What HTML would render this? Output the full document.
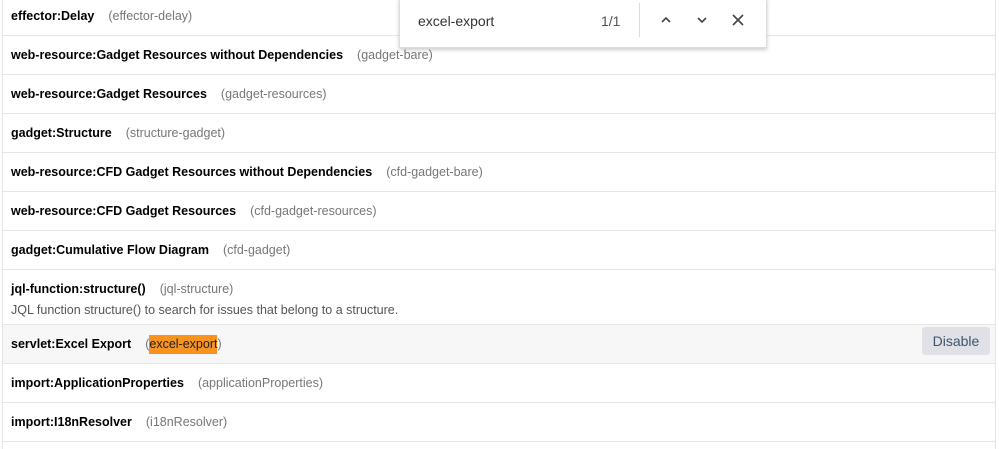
<!DOCTYPE html>
<html><head><style>
html,body{margin:0;width:999px;height:449px;overflow:hidden;background:#fff;font-family:"Liberation Sans",sans-serif;position:relative}
.wrap{position:absolute;left:2px;width:992px;top:-3px;height:452px;overflow:hidden;border-left:1px solid #e4e4e4;border-right:1px solid #e4e4e4;}
.row{height:38px;border-bottom:1px solid #e6e6e6;position:relative;box-sizing:content-box}
.row .t{position:absolute;left:8px;top:12px;font-size:12.5px;white-space:nowrap}
.row b{color:#000}
.k{color:#777;margin-left:14px;font-size:12.5px}
.d{position:absolute;left:8px;top:33px;font-size:12.5px;color:#555}
.hl{background:#f7f7f7}
.mark{background:#f7931e;color:#222;padding:2px 0 3px}
.btn{position:absolute;right:5px;top:2px;width:68px;height:28px;background:#dfe1e6;border-radius:3px;color:#42526e;font-size:14px;line-height:28px;text-align:center}
.find{position:absolute;left:399px;top:-2px;width:366px;height:49px;background:#fff;border:1px solid #ddd;border-top:none;box-shadow:0 2px 4px rgba(0,0,0,.2);font-size:14px;color:#333}
</style></head><body>
<div class="wrap">
<div class="row"><div class="t"><b>effector:Delay</b><span class="k">(effector-delay)</span></div></div>
<div class="row"><div class="t"><b>web-resource:Gadget Resources without Dependencies</b><span class="k">(gadget-bare)</span></div></div>
<div class="row"><div class="t"><b>web-resource:Gadget Resources</b><span class="k">(gadget-resources)</span></div></div>
<div class="row"><div class="t"><b>gadget:Structure</b><span class="k">(structure-gadget)</span></div></div>
<div class="row"><div class="t"><b>web-resource:CFD Gadget Resources without Dependencies</b><span class="k">(cfd-gadget-bare)</span></div></div>
<div class="row"><div class="t"><b>web-resource:CFD Gadget Resources</b><span class="k">(cfd-gadget-resources)</span></div></div>
<div class="row"><div class="t"><b>gadget:Cumulative Flow Diagram</b><span class="k">(cfd-gadget)</span></div></div>
<div class="row" style="height:54px"><div class="t"><b>jql-function:structure()</b><span class="k">(jql-structure)</span></div><div class="d">JQL function structure() to search for issues that belong to a structure.</div></div>
<div class="row hl"><div class="t"><b>servlet:Excel Export</b><span class="k">(<span class="mark">excel-export</span>)</span></div><div class="btn">Disable</div></div>
<div class="row"><div class="t"><b>import:ApplicationProperties</b><span class="k">(applicationProperties)</span></div></div>
<div class="row"><div class="t"><b>import:I18nResolver</b><span class="k">(i18nResolver)</span></div></div>
</div>
<div class="find">
<span style="position:absolute;left:18px;top:15px">excel-export</span>
<span style="position:absolute;left:201px;top:15px;color:#555">1/1</span>
<div style="position:absolute;left:239px;top:5px;width:1px;height:34px;background:#ddd"></div>
<svg style="position:absolute;left:258px;top:14px" width="100" height="16" viewBox="0 0 100 16" fill="none" stroke="#444" stroke-width="1.6">
<path d="M4 10 L8 6 L12 10"/><path d="M40 6 L44 10 L48 6"/><path d="M75 3 L85 13 M85 3 L75 13"/></svg>
</div>
</body></html>
